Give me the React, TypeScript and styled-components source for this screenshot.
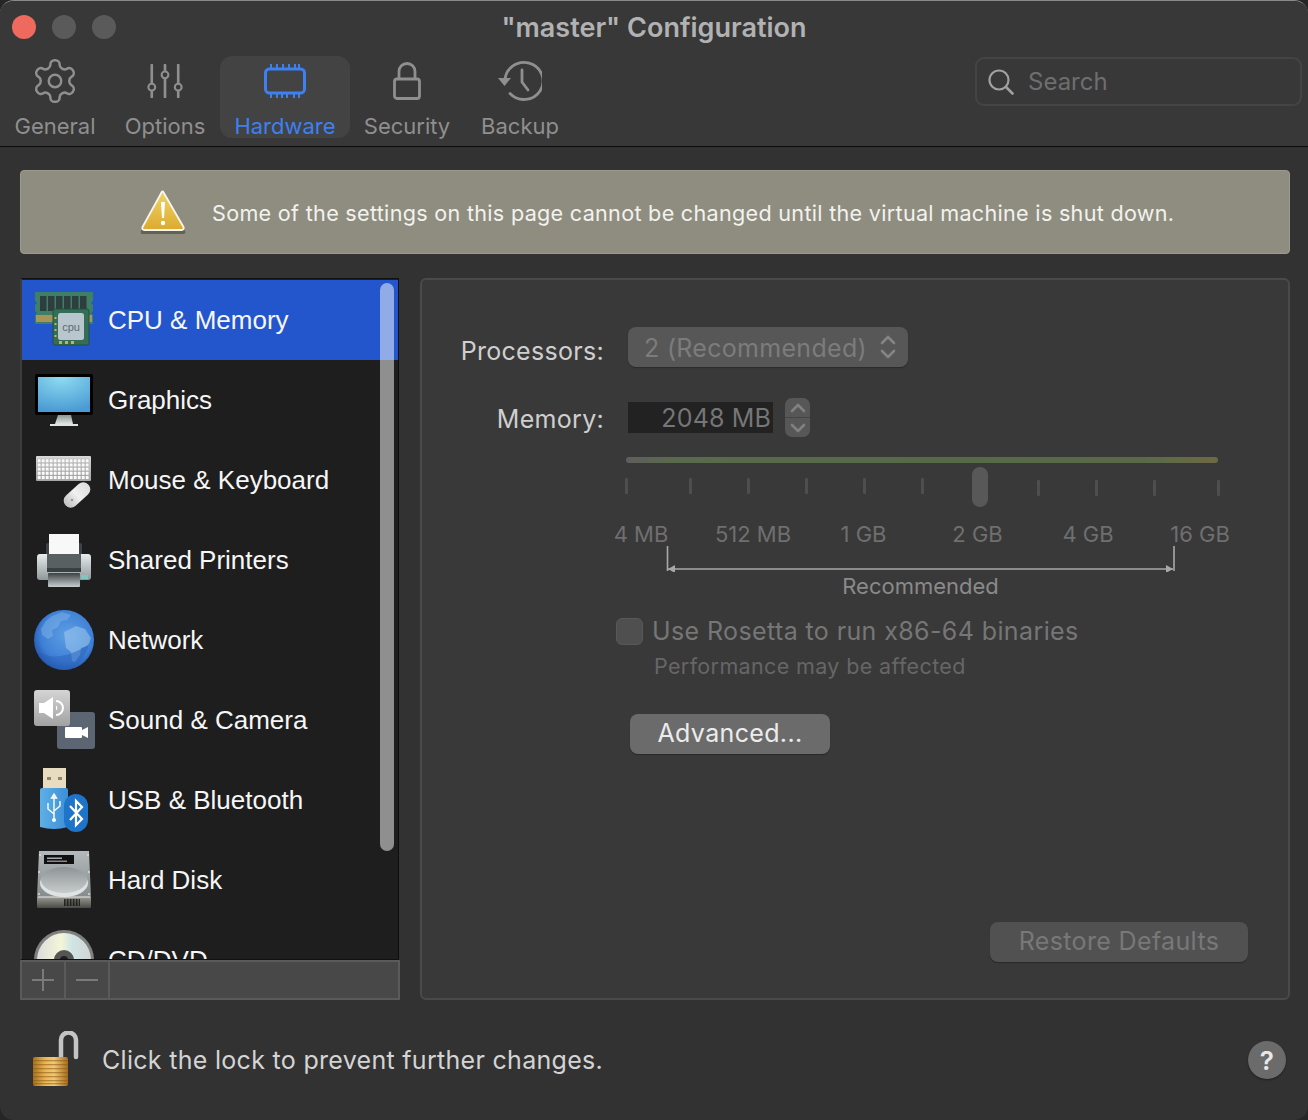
import React from "react";
import styled, { createGlobalStyle } from "styled-components";

const Global = createGlobalStyle`
  html, body { margin: 0; padding: 0; background: #262626; }
  * { box-sizing: border-box; }
  body { font-family: Inter, "Liberation Sans", sans-serif; -webkit-font-smoothing: antialiased; }
`;

const Window = styled.div`
  width: 1308px; height: 1120px; display: flex; flex-direction: column;
  background: #323232; border-radius: 14px; overflow: hidden;
  border-top: 1px solid #8a8a8a;
`;
const Toolbar = styled.header`
  height: 146px; flex: none; background: #383838; border-bottom: 1.5px solid #0c0c0c;
  display: flex; flex-direction: column;
`;
const TitleRow = styled.div`
  height: 55px; flex: none; display: grid; grid-template-columns: 1fr auto 1fr; align-items: center;
  padding: 0 12px 3px;
`;
const Lights = styled.div`display: flex; gap: 16px;`;
const Light = styled.span<{ $c: string }>`
  width: 24px; height: 24px; border-radius: 50%; background: ${p => p.$c};
`;
const Title = styled.h1`
  margin: 2px 0 0; font-size: 27px; font-weight: 600; color: #b2b2b2; line-height: 30px; letter-spacing: 0;
`;
const ToolRow = styled.div`display: flex; align-items: flex-start; justify-content: space-between; padding-right: 6px;`;
const Tabs = styled.nav`display: flex;`;
const Tab = styled.div<{ $w: number; $active?: boolean }>`
  width: ${p => p.$w}px; height: 82px; display: flex; flex-direction: column; align-items: center;
  border-radius: 12px; background: ${p => (p.$active ? "#434343" : "transparent")};
  color: ${p => (p.$active ? "#3c80f2" : "#8f8f8f")};
`;
const TabIcon = styled.div`height: 50px; flex: none; display: flex; align-items: center; justify-content: center;`;
const TabLabel = styled.span`flex: none; font-size: 22px; line-height: 28px; margin-top: 6px;`;
const Search = styled.div`
  width: 327px; height: 49px; margin-top: 1px; border: 2px solid #444; border-radius: 9px;
  display: flex; align-items: center; gap: 14px; padding-left: 11px;
  font-size: 24px; color: #6e6e6e;
`;

const Main = styled.main`
  height: 853px; flex: none; padding: 23px 18px 0 20px; display: flex; flex-direction: column; gap: 24px;
`;
const Banner = styled.div`
  height: 84px; flex: none; background: #8f8d80; border-radius: 4px; display: flex; align-items: center;
  padding-left: 119px; gap: 26px; color: #f2f2ee; font-size: 21.6px; letter-spacing: 0.29px;
  border: 1px solid #9c9a8f;
`;
const BannerText = styled.span`margin-top: 2px;`;
const Columns = styled.div`display: grid; grid-template-columns: 380px 870px; gap: 20px; height: 722px;`;
const Left = styled.section`display: flex; flex-direction: column;`;
const List = styled.div`
  position: relative; height: 682px; margin-right: 1px; background: #1e1e1e; overflow: hidden;
  border-style: solid; border-width: 1px 1px 1px 2px; border-color: #111 #0e0e0e #111 #3c3c3c; padding-top: 1px;
`;
const Row = styled.div<{ $sel?: boolean }>`
  height: 80px; display: flex; align-items: center; padding-left: 12px; gap: 14px;
  background: ${p => (p.$sel ? "#2356cc" : "transparent")};
  font-family: "Liberation Sans", Arial, sans-serif; font-size: 26px; color: #f6f6f6;
`;
const RowIcon = styled.svg`width: 60px; height: 60px; flex: none; overflow: visible;`;
const Scrollbar = styled.div`
  position: absolute; top: 4px; right: 4px; width: 14px; height: 568px; border-radius: 7px;
  background: rgba(255,255,255,0.5);
`;
const ListBar = styled.div`
  height: 40px; flex: none; background: #484848; border: 2px solid #5a5a5a; display: flex;
`;
const BarBtn = styled.div`
  width: 44px; border-right: 2px solid #5a5a5a; display: flex; align-items: center; justify-content: center;
`;

const Panel = styled.section`
  background: #393939; border: 2px solid #4a4a4a; border-radius: 6px; display: flex; flex-direction: column;
  padding-top: 47px;
`;
const FormRow = styled.div`display: flex; align-items: flex-start; gap: 24px;`;
const FormLabel = styled.label<{ $top: number }>`
  width: 182px; text-align: right; color: #cfcfcf; font-size: 25px; line-height: 30px; margin-top: ${p => p.$top}px;
  letter-spacing: 0.3px;
`;
const Select = styled.div`
  width: 280px; height: 40px; border-radius: 8px; background: #575757; color: #7c7c7c;
  font-size: 25px; letter-spacing: 0.3px; display: flex; align-items: center; justify-content: space-between; padding: 2px 12px 0 16px;
  box-shadow: 0 1px 1px rgba(0,0,0,.25);
`;
const ArrowSlot = styled.span`display: flex; margin-top: -2px;`;
const MemoryRow = styled(FormRow)`margin-top: 31px; height: 39px;`;
const NumberField = styled.div`
  width: 145px; height: 31px; margin-top: 4px; background: #222; color: #767676; font-size: 25px; letter-spacing: 0.15px;
  text-align: right; line-height: 33px; padding-right: 2px;
`;
const Stepper = styled.div`
  width: 25px; height: 39px; margin-left: -12px; border-radius: 7px; background: #575757; display: flex; flex-direction: column;
`;
const StepHalf = styled.div`
  flex: 1; display: flex; align-items: center; justify-content: center;
  &:first-child { border-bottom: 1px solid #454545; }
`;
const Slider = styled.div`position: relative; margin: 20px 0 0 204px; width: 592px;`;
const Track = styled.div`
  height: 6px; border-radius: 3px;
  background: linear-gradient(90deg, #5e5e5e 0%, #5a6a4c 8%, #566a48 50%, #5a6a48 88%, #6c6a44 100%);
`;
const Ticks = styled.div`
  display: grid; grid-template-columns: 64px repeat(8, 58px) 64px 0; margin: 15px 0 0 -1px; height: 18px;
`;
const Tick = styled.span<{ $low?: boolean; $hide?: boolean }>`
  width: 3px; height: 16px; margin-top: ${p => (p.$low ? 2 : 0)}px; background: #4e4e4e; border-radius: 1px;
  visibility: ${p => (p.$hide ? "hidden" : "visible")};
`;
const Thumb = styled.div`
  position: absolute; left: 346px; top: 10px; width: 16px; height: 40px; border-radius: 8px; background: #585858;
`;
const SliderLabels = styled.div`
  display: grid; grid-template-columns: 112px 112px 109px 119px 102px 122px; margin: 25px 0 0 -41px; width: 676px;
  color: #6f6f6f; font-size: 22px; line-height: 26px; text-align: center;
`;
const Bracket = styled.svg`display: block; margin: -2px 0 0 40px;`;
const Recommended = styled.div`
  width: 507px; margin: 2px 0 0 41px; text-align: center; color: #8a8a8a; font-size: 22px; line-height: 24px;
`;
const CheckRow = styled.div`display: flex; align-items: center; gap: 9px; margin: 19px 0 0 194px; height: 28px;`;
const Check = styled.span`width: 27px; height: 27px; border-radius: 6px; background: #4f4f4f; border: 1px solid #585858;`;
const CheckText = styled.span`color: #767676; font-size: 25px; letter-spacing: 0.39px;`;
const Hint = styled.div`margin: 9px 0 0 232px; color: #666; font-size: 21.5px; line-height: 24px; letter-spacing: 0.36px;`;
const Button = styled.div<{ $w: number; $off?: boolean }>`
  width: ${p => p.$w}px; height: 40px; border-radius: 8px; display: flex; align-items: center; justify-content: center;
  background: ${p => (p.$off ? "#515151" : "#6b6b6b")}; color: ${p => (p.$off ? "#787878" : "#ececec")};
  font-size: 25px; letter-spacing: 0.35px; box-shadow: 0 1px 1px rgba(0,0,0,.3);
  padding-bottom: 2px;
`;
const AdvancedWrap = styled.div`margin: 36px 0 0 208px;`;
const RestoreWrap = styled.div`margin: auto 40px 36px 0; align-self: flex-end;`;

const Footer = styled.footer`
  flex: 1; display: flex; align-items: center; padding: 0 22px 0 33px; color: #d4d4d4; font-size: 25px; letter-spacing: 0.3px;
`;
const FooterText = styled.span`margin-left: 22px; flex: 1;`;
const Help = styled.div`
  width: 38px; height: 38px; border-radius: 50%; background: #6b6b6b; color: #e8e8e8; font-weight: 600; font-size: 26px;
  display: flex; align-items: center; justify-content: center; box-shadow: 0 1px 2px rgba(0,0,0,.4);
`;

const Gear = () => (
  <svg width="50" height="50" viewBox="0 0 24 24" fill="none" stroke="currentColor" strokeWidth="1.2" strokeLinejoin="round">
    <path d="M12.22 2h-.44a2 2 0 0 0-2 2v.18a2 2 0 0 1-1 1.73l-.43.25a2 2 0 0 1-2 0l-.15-.08a2 2 0 0 0-2.73.73l-.22.38a2 2 0 0 0 .73 2.73l.15.1a2 2 0 0 1 1 1.72v.51a2 2 0 0 1-1 1.74l-.15.09a2 2 0 0 0-.73 2.73l.22.38a2 2 0 0 0 2.73.73l.15-.08a2 2 0 0 1 2 0l.43.25a2 2 0 0 1 1 1.73V20a2 2 0 0 0 2 2h.44a2 2 0 0 0 2-2v-.18a2 2 0 0 1 1-1.73l.43-.25a2 2 0 0 1 2 0l.15.08a2 2 0 0 0 2.73-.73l.22-.39a2 2 0 0 0-.73-2.73l-.15-.08a2 2 0 0 1-1-1.74v-.5a2 2 0 0 1 1-1.74l.15-.09a2 2 0 0 0 .73-2.73l-.22-.38a2 2 0 0 0-2.73-.73l-.15.08a2 2 0 0 1-2 0l-.43-.25a2 2 0 0 1-1-1.73V4a2 2 0 0 0-2-2z" />
    <circle cx="12" cy="12" r="3" />
  </svg>
);
const Sliders = () => (
  <svg width="36" height="34" viewBox="0 0 38 36" fill="none" stroke="currentColor" strokeWidth="2.8" strokeLinecap="round">
    <path d="M5 1v19M5 29v6M19 1v6M19 16v19M33 1v19M33 29v6" />
    <circle cx="5" cy="24.5" r="3.6" strokeWidth="2.2" />
    <circle cx="19" cy="11.5" r="3.6" strokeWidth="2.2" />
    <circle cx="33" cy="24.5" r="3.6" strokeWidth="2.2" />
  </svg>
);
const Chip = () => (
  <svg width="42" height="36" viewBox="0 0 42 36" fill="none" stroke="currentColor">
    <rect x="1.5" y="6" width="39" height="24" rx="4" strokeWidth="3" />
    <path d="M7 1v5M13 1v5M19 1v5M25 1v5M31 1v5M35 1v5M7 30v5M13 30v5M18 30v5M23 30v5M30 30v5M35 30v5" strokeWidth="2" />
  </svg>
);
const LockTab = () => (
  <svg width="28" height="38" viewBox="0 0 28 38" fill="none" stroke="currentColor" strokeWidth="2.8" strokeLinejoin="round">
    <rect x="1.5" y="17" width="25" height="19.5" rx="2.5" />
    <path d="M6 17V9.5a8 8 0 0 1 16 0V17" />
  </svg>
);
const HistoryIcon = () => (
  <svg width="44" height="40" viewBox="0 0 44 40" fill="none" stroke="currentColor" strokeWidth="2.8" strokeLinecap="round">
    <path d="M7 20a19 18.5 0 1 1 5 12.5" />
    <path d="M0 17h13l-6.5 8z" fill="currentColor" stroke="none" />
    <path d="M24 9v12l6 8" />
  </svg>
);
const SearchIcon = () => (
  <svg width="26" height="26" viewBox="0 0 26 26" fill="none" stroke="#a0a0a0" strokeWidth="2.2" strokeLinecap="round">
    <circle cx="11" cy="11" r="9.5" />
    <path d="M18 18l6.5 6.5" strokeWidth="2.6" />
  </svg>
);
const Warning = () => (
  <svg width="46" height="44" viewBox="0 0 46 44">
    <defs>
      <linearGradient id="wg" x1="0" y1="0" x2="0" y2="1">
        <stop offset="0" stopColor="#efd468" /><stop offset="1" stopColor="#dcaa2e" />
      </linearGradient>
    </defs>
    <path d="M23 2L45 39a2 2 0 0 1-2 3H3a2 2 0 0 1-2-3z" fill="#2c2c24" opacity=".45" transform="translate(0 2)" />
    <path d="M23 1.5L43.5 37a2 2 0 0 1-1.8 3H4.3a2 2 0 0 1-1.8-3L21 3.5a2 2 0 0 1 2-2z" fill="url(#wg)" stroke="#f8f6ee" strokeWidth="1.8" strokeLinejoin="round" />
    <path d="M21 12h4l-1 16h-2z" fill="#fff" />
    <circle cx="23" cy="33" r="2.2" fill="#fff" />
  </svg>
);

const CpuIcon = () => (
  <RowIcon viewBox="0 0 60 60">
    <path d="M1 2h58v9l-2 2 2 2v6l-2 2 2 2v8a1 1 0 0 1-1 1H2a1 1 0 0 1-1-1v-8l2-2-2-2v-6l2-2-2-2z" fill="#3f7f63" />
    <rect x="2" y="25" width="56" height="7" fill="#a89358" />
    {[6, 14, 22, 30, 38, 46].map(x => <rect key={x} x={x} y="6" width="6.5" height="15" fill="#2e3d3d" />)}
    <rect x="19" y="19" width="36" height="36" rx="2" fill="#336f58" stroke="#25503f" />
    <rect x="24" y="23" width="26" height="27" rx="2.5" fill="#b9c6cd" />
    <text x="37" y="41" textAnchor="middle" fontSize="11" fontFamily="Liberation Sans, sans-serif" fill="#5e6a70">cpu</text>
    {[25, 31, 37].map(x => <rect key={x} x={x} y="51" width="3" height="3" fill="#c8b060" />)}
    {[27, 33, 39, 45].map(y => <rect key={y} x="20.5" y={y} width="2" height="2" fill="#c8b060" />)}
  </RowIcon>
);
const MonitorIcon = () => (
  <RowIcon viewBox="0 0 60 60">
    <defs>
      <radialGradient id="scr" cx=".45" cy="0" r="1">
        <stop offset="0" stopColor="#8fdcf2" /><stop offset="1" stopColor="#4a9bd4" />
      </radialGradient>
      <linearGradient id="std" x1="0" y1="0" x2="0" y2="1"><stop offset="0" stopColor="#8c9694" /><stop offset="1" stopColor="#dfe6e4" /></linearGradient>
    </defs>
    <path d="M24 45h13l2 9H21z" fill="url(#std)" />
    <rect x="16" y="54" width="28" height="2" fill="#dfe3e2" />
    <rect x="1" y="4" width="58" height="41" rx="2" fill="#000" />
    <rect x="4" y="7" width="52" height="35" fill="url(#scr)" />
  </RowIcon>
);
const KeyboardIcon = () => {
  const rows = [0, 1, 2, 3, 4];
  return (
    <RowIcon viewBox="0 0 60 60">
      <defs>
        <linearGradient id="kb" x1="0" y1="0" x2="0" y2="1"><stop offset="0" stopColor="#d8d8d8" /><stop offset="1" stopColor="#a6a6a6" /></linearGradient>
        <linearGradient id="ms" x1="0" y1="0" x2="1" y2="0"><stop offset="0" stopColor="#c0c0c0" /><stop offset=".5" stopColor="#f0f0f0" /><stop offset="1" stopColor="#dcdcdc" /></linearGradient>
      </defs>
      <rect x="2" y="6" width="55" height="25" rx="1" fill="url(#kb)" />
      {rows.map(r => (
        <g key={r}>
          {Array.from({ length: 13 }).map((_, i) => (
            <rect key={i} x={3.6 + i * 4} y={9 + r * 4.2} width="3.3" height="3.4" fill="#fafafa" stroke="#8a8a8a" strokeWidth=".25" />
          ))}
        </g>
      ))}
      <rect x="27.5" y="38" width="31" height="14" rx="7" transform="rotate(-42 43 45)" fill="url(#ms)" />
      <circle cx="38" cy="50" r="1.3" fill="#9a9a9a" />
    </RowIcon>
  );
};
const PrinterIcon = () => (
  <RowIcon viewBox="0 0 60 60">
    <defs>
      <linearGradient id="pr" x1="0" y1="0" x2="0" y2="1"><stop offset="0" stopColor="#e8eced" /><stop offset="1" stopColor="#8f989b" /></linearGradient>
      <linearGradient id="pr2" x1="0" y1="0" x2="0" y2="1"><stop offset="0" stopColor="#3c4142" /><stop offset="1" stopColor="#c9cfd1" /></linearGradient>
    </defs>
    <rect x="12" y="13" width="36" height="14" rx="2" fill="#3d4445" />
    <rect x="15" y="4" width="30" height="21" fill="#f8f8f8" />
    <rect x="3" y="24" width="54" height="26" rx="3" fill="url(#pr)" />
    <rect x="13" y="24" width="34" height="18" fill="#596061" />
    <rect x="13" y="38" width="34" height="4" fill="#3a3f40" />
    <rect x="14" y="43" width="32" height="14" rx="1" fill="url(#pr2)" />
    <rect x="47" y="45" width="7" height="4" fill="#7fc5c0" />
  </RowIcon>
);
const GlobeIcon = () => (
  <RowIcon viewBox="0 0 60 60">
    <defs>
      <radialGradient id="gl" cx=".55" cy=".42" r=".62">
        <stop offset="0" stopColor="#5f9fe4" /><stop offset=".7" stopColor="#3e80d6" /><stop offset="1" stopColor="#1f50a8" />
      </radialGradient>
    </defs>
    <circle cx="30" cy="30" r="30" fill="url(#gl)" />
    <path d="M18 6l10-4 9 3-4 5-6 1-3 6-6 3 1 6-5 3-6-4-1-6 5-8z" fill="#8fbdea" opacity=".4" />
    <path d="M30 22l12-6 9 3 6 9-3 8-7 2-1 7-5 7-3-1-1-9-5-4-1-7z" fill="#a5cdf0" opacity=".5" />
    <path d="M5 42c12 8 32 5 50-8-4 16-15 26-25 26S10 52 5 42z" fill="#2a5fb8" opacity=".5" />
  </RowIcon>
);
const SoundIcon = () => (
  <RowIcon viewBox="0 0 60 60">
    <defs>
      <linearGradient id="so" x1="0" y1="0" x2="0" y2="1"><stop offset="0" stopColor="#d4d4d4" /><stop offset="1" stopColor="#a2a2a2" /></linearGradient>
    </defs>
    <rect x="23" y="22" width="38" height="37" rx="3" fill="#5b6672" />
    <path d="M31 38a1 1 0 0 1 1-1h15a1 1 0 0 1 1 1v2l6-3v11l-6-3v2a1 1 0 0 1-1 1H32a1 1 0 0 1-1-1z" fill="#fff" />
    <rect x="0" y="0" width="36" height="36" rx="3" fill="url(#so)" />
    <path d="M5 13h5l9-6v22l-9-6H5z" fill="#fff" />
    <path d="M22 11a7 7 0 0 1 0 14" fill="none" stroke="#fff" strokeWidth="2" />
    <path d="M22 15.5a3 3 0 0 1 0 5z" fill="#fff" />
  </RowIcon>
);
const UsbIcon = () => (
  <RowIcon viewBox="0 0 60 60">
    <defs>
      <linearGradient id="ub" x1="0" y1="0" x2="1" y2="0"><stop offset="0" stopColor="#5db0e6" /><stop offset="1" stopColor="#3d8fd6" /></linearGradient>
    </defs>
    <rect x="9" y="-2" width="23" height="22" fill="#e8dcc0" />
    <rect x="13" y="7" width="4" height="3" fill="#8a8474" />
    <rect x="24" y="7" width="4" height="3" fill="#8a8474" />
    <path d="M6 20q0-2 2-2h24q2 0 2 2v37q-14 4-28 0z" fill="url(#ub)" />
    <path d="M20 24v26M20 24l-2.5 4h5zM20 44l-6-5v-6M20 41l6-5v-5" fill="none" stroke="#fff" strokeWidth="1.4" />
    <circle cx="20" cy="50" r="2" fill="#fff" />
    <rect x="30" y="24" width="24" height="38" rx="12" fill="#1e74c8" />
    <path d="M36 36l12 13-6 6V31l6 6-12 13" fill="none" stroke="#fff" strokeWidth="2.2" />
  </RowIcon>
);
const DiskIcon = () => (
  <RowIcon viewBox="0 0 60 60">
    <defs>
      <linearGradient id="hd" x1="0" y1="0" x2="0" y2="1"><stop offset="0" stopColor="#b4babb" /><stop offset="1" stopColor="#858b8c" /></linearGradient>
      <linearGradient id="hd2" x1="0" y1="0" x2="0" y2="1"><stop offset="0" stopColor="#8f9596" /><stop offset="1" stopColor="#c6cbcb" /></linearGradient>
      <linearGradient id="hd3" x1="0" y1="0" x2="0" y2="1"><stop offset="0" stopColor="#9a9a92" /><stop offset="1" stopColor="#4a4a45" /></linearGradient>
    </defs>
    <path d="M5 1h50l2 47H3z" fill="url(#hd)" />
    <rect x="3" y="47" width="54" height="11" rx="1" fill="url(#hd3)" />
    <rect x="10" y="5" width="30" height="9" fill="#111" />
    <rect x="13" y="7.5" width="15" height="1.5" fill="#aaa" />
    <rect x="13" y="10.5" width="20" height="1.5" fill="#888" />
    <ellipse cx="30" cy="33" rx="24" ry="14" fill="#dfe3e3" />
    <ellipse cx="30" cy="30" rx="23" ry="13" fill="url(#hd2)" />
    <path d="M4 47h52" stroke="#e8e8e8" strokeWidth="1" />
    {[[6, 5], [54, 5], [5, 22], [55, 22], [5, 44], [55, 44]].map(([x, y]) => <circle key={`${x}-${y}`} cx={x} cy={y} r="1" fill="#d8dcdc" />)}
    {Array.from({ length: 11 }).map((_, i) => <rect key={i} x={30 + i * 1.5} y="49" width=".8" height="7" fill="#111" />)}
  </RowIcon>
);
const DiscIcon = () => (
  <RowIcon viewBox="0 0 60 60">
    <defs>
      <linearGradient id="cd" x1="0" y1="0" x2="1" y2="0">
        <stop offset="0" stopColor="#dcdcdc" /><stop offset=".45" stopColor="#f3f6d8" /><stop offset=".65" stopColor="#cfe4e4" /><stop offset="1" stopColor="#d4d4d4" />
      </linearGradient>
    </defs>
    <circle cx="30" cy="30" r="30" fill="#808080" />
    <circle cx="30" cy="30" r="27" fill="url(#cd)" />
    <circle cx="30" cy="30" r="10" fill="#555" />
    <circle cx="30" cy="30" r="4" fill="#1e1e1e" />
  </RowIcon>
);
const OpenLock = () => (
  <svg width="47" height="58" viewBox="0 0 47 58">
    <defs>
      <linearGradient id="lk" x1="0" y1="0" x2="1" y2="0">
        <stop offset="0" stopColor="#a8701c" /><stop offset=".35" stopColor="#eab655" /><stop offset=".6" stopColor="#f0c878" /><stop offset="1" stopColor="#a86c1a" />
      </linearGradient>
    </defs>
    <path d="M28 28V9a7.5 7.5 0 0 1 15 0v17" fill="none" stroke="#c4c4c4" strokeWidth="4.5" strokeLinecap="round" />
    <rect x="0" y="26" width="35" height="29" rx="2" fill="url(#lk)" />
    {[29, 33, 37, 41, 45, 49, 52].map(y => <rect key={y} x="0" y={y} width="35" height="1.3" fill="#8a5a14" opacity=".55" />)}
  </svg>
);
const SelectArrows = () => (
  <svg width="16" height="26" viewBox="0 0 16 26" fill="none" stroke="#848484" strokeWidth="2.6" strokeLinecap="round" strokeLinejoin="round">
    <path d="M2 9l6-6 6 6M2 17l6 6 6-6" />
  </svg>
);
const Chevron = ({ up }: { up?: boolean }) => (
  <svg width="16" height="10" viewBox="0 0 16 10" fill="none" stroke="#808080" strokeWidth="2.6" strokeLinecap="round" strokeLinejoin="round">
    <path d={up ? "M2 8l6-6 6 6" : "M2 2l6 6 6-6"} />
  </svg>
);

const rows: [string, React.ReactNode][] = [
  ["CPU & Memory", <CpuIcon />],
  ["Graphics", <MonitorIcon />],
  ["Mouse & Keyboard", <KeyboardIcon />],
  ["Shared Printers", <PrinterIcon />],
  ["Network", <GlobeIcon />],
  ["Sound & Camera", <SoundIcon />],
  ["USB & Bluetooth", <UsbIcon />],
  ["Hard Disk", <DiskIcon />],
  ["CD/DVD", <DiscIcon />],
];

export default function App() {
  return (
    <Window>
      <Global />
      <Toolbar>
        <TitleRow>
          <Lights>
            <Light $c="#ee6a5f" />
            <Light $c="#5a5a5a" />
            <Light $c="#5a5a5a" />
          </Lights>
          <Title>"master" Configuration</Title>
          <span />
        </TitleRow>
        <ToolRow>
          <Tabs>
            <Tab $w={110}><TabIcon><Gear /></TabIcon><TabLabel>General</TabLabel></Tab>
            <Tab $w={110}><TabIcon><Sliders /></TabIcon><TabLabel>Options</TabLabel></Tab>
            <Tab $w={130} $active><TabIcon><Chip /></TabIcon><TabLabel>Hardware</TabLabel></Tab>
            <Tab $w={114}><TabIcon><LockTab /></TabIcon><TabLabel>Security</TabLabel></Tab>
            <Tab $w={112}><TabIcon><HistoryIcon /></TabIcon><TabLabel>Backup</TabLabel></Tab>
          </Tabs>
          <Search><SearchIcon /><span>Search</span></Search>
        </ToolRow>
      </Toolbar>
      <Main>
        <Banner>
          <Warning />
          <BannerText>Some of the settings on this page cannot be changed until the virtual machine is shut down.</BannerText>
        </Banner>
        <Columns>
          <Left>
            <List>
              {rows.map(([label, icon], i) => (
                <Row key={label} $sel={i === 0}>{icon}<span>{label}</span></Row>
              ))}
              <Scrollbar />
            </List>
            <ListBar>
              <BarBtn>
                <svg width="24" height="24" viewBox="0 0 24 24" stroke="#7a7a7a" strokeWidth="2"><path d="M12 1v22M1 12h22" /></svg>
              </BarBtn>
              <BarBtn>
                <svg width="24" height="24" viewBox="0 0 24 24" stroke="#7a7a7a" strokeWidth="2"><path d="M1 12h22" /></svg>
              </BarBtn>
            </ListBar>
          </Left>
          <Panel>
            <FormRow>
              <FormLabel $top={9}>Processors:</FormLabel>
              <Select><span>2 (Recommended)</span><ArrowSlot><SelectArrows /></ArrowSlot></Select>
            </FormRow>
            <MemoryRow>
              <FormLabel $top={6}>Memory:</FormLabel>
              <NumberField>2048 MB</NumberField>
              <Stepper>
                <StepHalf><Chevron up /></StepHalf>
                <StepHalf><Chevron /></StepHalf>
              </Stepper>
            </MemoryRow>
            <Slider>
              <Track />
              <Ticks>
                {Array.from({ length: 11 }).map((_, i) => <Tick key={i} $low={i > 6} $hide={i === 6} />)}
              </Ticks>
              <Thumb />
              <SliderLabels>
                <span>4 MB</span><span>512 MB</span><span>1 GB</span><span>2 GB</span><span>4 GB</span><span>16 GB</span>
              </SliderLabels>
              <Bracket width="510" height="27" viewBox="0 0 510 27" fill="none">
                <path d="M1.5 1v25M508 1v25M2 24h505" stroke="#a8a8a8" strokeWidth="1.6" />
                <path d="M2 24l7-4v8zM507 24l-7-4v8z" fill="#a8a8a8" />
              </Bracket>
              <Recommended>Recommended</Recommended>
            </Slider>
            <CheckRow>
              <Check />
              <CheckText>Use Rosetta to run x86-64 binaries</CheckText>
            </CheckRow>
            <Hint>Performance may be affected</Hint>
            <AdvancedWrap><Button $w={200}>Advanced...</Button></AdvancedWrap>
            <RestoreWrap><Button $w={258} $off>Restore Defaults</Button></RestoreWrap>
          </Panel>
        </Columns>
      </Main>
      <Footer>
        <OpenLock />
        <FooterText>Click the lock to prevent further changes.</FooterText>
        <Help>?</Help>
      </Footer>
    </Window>
  );
}
